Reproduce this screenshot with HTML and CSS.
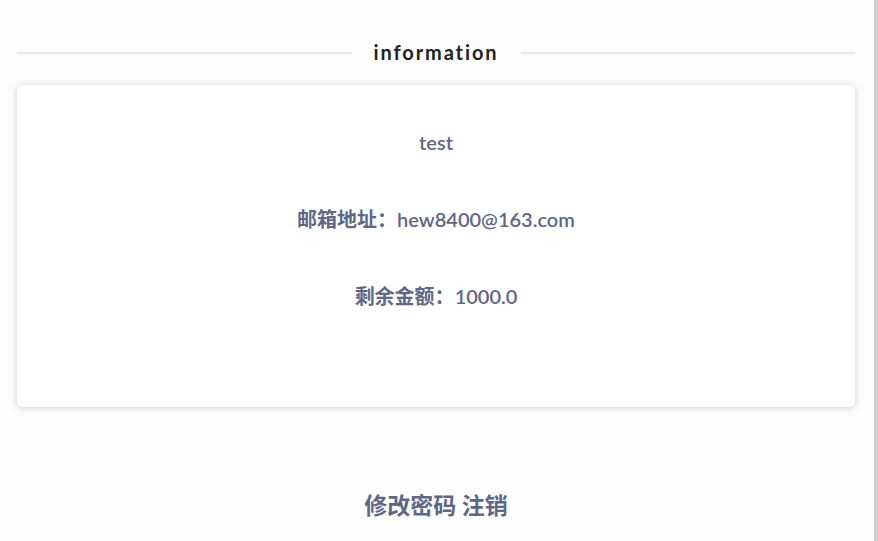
FILE: index.html
```html
<!DOCTYPE html>
<html>
<head>
<meta charset="utf-8">
<link rel="stylesheet" href="styles.css">
</head>
<body>
<div class="page">
  <div class="divider">
    <span class="line"></span>
    <h2 class="title">information</h2>
    <span class="line"></span>
  </div>
  <div class="card">
    <p class="row">test</p>
    <p class="row"><b>邮箱地址：</b>hew8400@163.com</p>
    <p class="row"><b>剩余金额：</b>1000.0</p>
  </div>
  <div class="actions">
    <a class="act">修改密码</a> <a class="act">注销</a>
  </div>
</div>
</body>
</html>
```
FILE: styles.css
```css
html, body {
  margin: 0;
  padding: 0;
  height: 100%;
}
body {
  background: #fdfdfd;
  font-family: Lato, "Noto Sans CJK SC", sans-serif;
  overflow: hidden;
}
.page {
  box-sizing: border-box;
  width: 878px;
  height: 541px;
  padding: 31px 19px 0 17px;
  border-right: 4px solid #d2d2d2;
}
.divider {
  display: flex;
  align-items: center;
  height: 42px;
}
.line {
  flex: 1;
  height: 2px;
  background: #e6e6e6;
  margin-top: 2px;
}
.title {
  margin: 0 22px;
  font-size: 20px;
  font-weight: 700;
  letter-spacing: 1.9px;
  color: #222;
  line-height: 42px;
}
.card {
  margin-top: 12px;
  height: 322px;
  box-sizing: border-box;
  background: #fff;
  border-radius: 5px;
  box-shadow: 0 1px 6px rgba(0,0,0,0.2);
  padding-top: 45px;
  text-align: center;
}
.row {
  margin: 0 0 53px;
  font-size: 20px;
  line-height: 24px;
  color: #5f6787;
  font-weight: 600;
}
.row b {
  font-weight: 700;
}
.actions {
  margin-top: 84px;
  text-align: center;
  font-size: 23px;
  font-weight: 700;
  color: #5f6787;
  line-height: 28px;
}
.act {
  cursor: pointer;
}
```
